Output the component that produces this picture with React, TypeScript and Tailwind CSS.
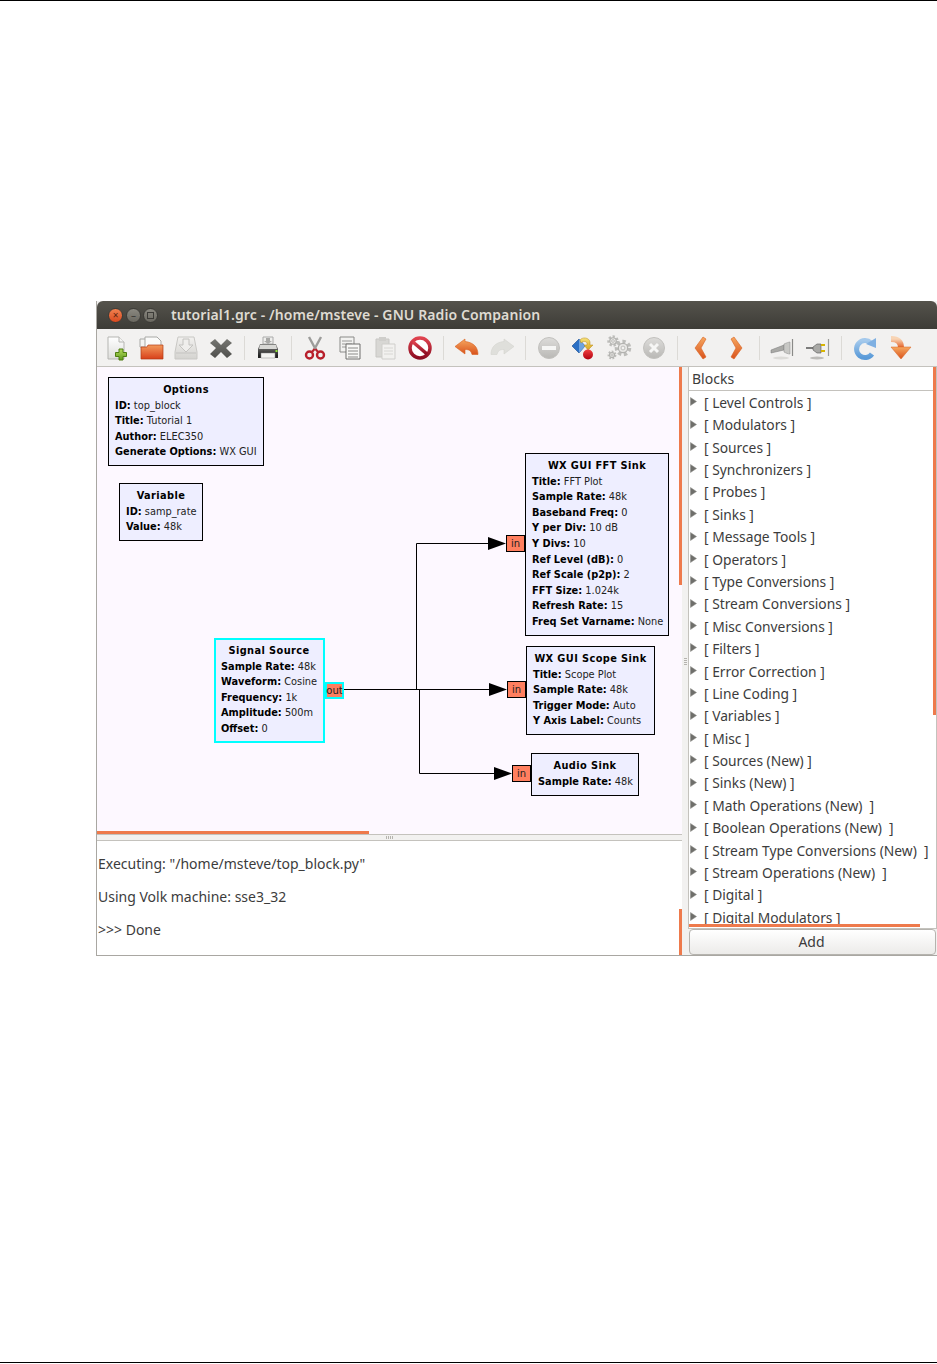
import React from 'react';

const blockCategories = [
  '[ Level Controls ]', '[ Modulators ]', '[ Sources ]', '[ Synchronizers ]', '[ Probes ]', '[ Sinks ]',
  '[ Message Tools ]', '[ Operators ]', '[ Type Conversions ]', '[ Stream Conversions ]', '[ Misc Conversions ]',
  '[ Filters ]', '[ Error Correction ]', '[ Line Coding ]', '[ Variables ]', '[ Misc ]', '[ Sources (New) ]',
  '[ Sinks (New) ]', '[ Math Operations (New)  ]', '[ Boolean Operations (New)  ]',
  '[ Stream Type Conversions (New)  ]', '[ Stream Operations (New)  ]', '[ Digital ]', '[ Digital Modulators ]',
];

interface FlowBlockProps {
  title: string;
  rows: [string, string][];
  className: string;
  selected?: boolean;
}

function FlowBlock({ title, rows, className, selected }: FlowBlockProps) {
  return (
    <div
      className={`absolute bg-[#eeeeff] text-[9.8px] leading-[15.6px] whitespace-nowrap text-[#222] font-['DejaVu_Sans',sans-serif] ${selected ? 'border-2 border-[#00ffff] pt-[3px] pl-[5px]' : 'border border-black pt-[4px] pl-[6px]'} ${className}`}
    >
      <div className="text-center pr-[6px] font-bold text-black tracking-[0.4px]">{title}</div>
      {rows.map(([k, v]) => (
        <div key={k}>
          <span className="font-bold text-black">{k}:</span> {v}
        </div>
      ))}
    </div>
  );
}

function Port({ label, className, selected }: { label: string; className: string; selected?: boolean }) {
  return (
    <div
      className={`absolute flex items-center justify-center bg-[#ff7f5f] text-[10px] text-[#222] font-['DejaVu_Sans',sans-serif] ${selected ? 'border-2 border-[#00ffff]' : 'border border-black'} ${className}`}
    >
      {label}
    </div>
  );
}

function Grad({ id, from, to }: { id: string; from: string; to: string }) {
  return (
    <linearGradient id={id} x1="0" y1="0" x2="0" y2="1">
      <stop offset="0" stopColor={from} />
      <stop offset="1" stopColor={to} />
    </linearGradient>
  );
}

function Ico({ children }: { children: React.ReactNode }) {
  return (
    <div className="flex w-[35px] shrink-0 items-center justify-center">
      <svg width="26" height="26" viewBox="0 0 26 26">
        {children}
      </svg>
    </div>
  );
}

function Sep() {
  return (
    <div className="flex w-[12px] shrink-0 justify-center">
      <div className="h-[24px] w-px bg-[#dcdad6]" />
    </div>
  );
}

function Gear({ cx, cy, r }: { cx: number; cy: number; r: number }) {
  return (
    <g>
      <circle cx={cx} cy={cy} r={r} fill="none" stroke="#bdbdba" strokeWidth={r * 0.55} strokeDasharray={`${r * 0.5} ${r * 0.4}`} />
      <circle cx={cx} cy={cy} r={r * 0.72} fill="#e8e7e5" stroke="#b2b2af" strokeWidth="1.2" />
      <circle cx={cx} cy={cy} r={r * 0.3} fill="#f2f1f0" stroke="#b2b2af" strokeWidth="0.8" />
    </g>
  );
}

function Toolbar() {
  return (
    <div className="flex h-[38px] shrink-0 items-center bg-[#f2f1f0] pl-[1px] border-b border-[#c4c2bd]">
      <svg width="0" height="0" className="absolute">
        <defs>
          <Grad id="gPage" from="#ffffff" to="#dededb" />
          <Grad id="gGreen" from="#b5dc5c" to="#5f9a1e" />
          <Grad id="gFolder" from="#f39a5c" to="#d8401a" />
          <Grad id="gDrive" from="#f2f1ef" to="#d4d3d0" />
          <Grad id="gDark" from="#767672" to="#4f4f4c" />
          <Grad id="gPrinter" from="#8a8a88" to="#1e1e1e" />
          <Grad id="gRed" from="#e0434f" to="#8c0d22" />
          <Grad id="gOrange" from="#f6a860" to="#d9521c" />
          <Grad id="gGrey" from="#dddcda" to="#b9b8b5" />
          <Grad id="gBlue" from="#a4c9ec" to="#5a9ad8" />
          <Grad id="gDot" from="#f04040" to="#b00010" />
          <Grad id="gYellow" from="#f6e27a" to="#d9a520" />
          <Grad id="gFade" from="#f8d4b4" to="#e25a20" />
        </defs>
      </svg>
      {/* new */}
      <Ico>
        <path d="M5 2h11l5 5v17H5z" fill="url(#gPage)" stroke="#b5b5b2" />
        <path d="M16 2v5h5" fill="#f5f5f3" stroke="#b5b5b2" />
        <path d="M16 14h4v3.500h3.500v4H20V25h-4v-3.500h-3.500v-4H16z" fill="url(#gGreen)" stroke="#4e7d12" />
      </Ico>
      {/* open */}
      <Ico>
        <path d="M2 4h9v8H2z" fill="#f4f4f2" stroke="#a9a9a6" />
        <path d="M7 2h12l4 4v7H7z" fill="#fbfbfa" stroke="#a9a9a6" />
        <path d="M3 12h6l1-2h15v14H3z" fill="url(#gFolder)" stroke="#b23a14" strokeWidth="0.7" />
      </Ico>
      {/* save, disabled */}
      <Ico>
        <path d="M5 2h16l3 15v7H2v-7z" fill="url(#gDrive)" stroke="#c9c8c5" />
        <path d="M10 4h6v6h4l-7 7-7-7h4z" fill="#efeeec" stroke="#c4c3c0" />
        <path d="M3 18h20" stroke="#c4c3c0" />
      </Ico>
      {/* close */}
      <Ico>
        <path d="M7 4l6 6 6-6 5 4-6 5 6 6-5 4-6-6-6 6-5-4 6-6-6-5z" fill="url(#gDark)" />
      </Ico>
      <Sep />
      {/* print */}
      <Ico>
        <path d="M8 2h10v7H8z" fill="#eeeeec" stroke="#aaa" />
        <path d="M11 3h4v3h2l-4 3-4-3h2z" fill="#a8a8a6" />
        <path d="M5 9h16l2 5v7H3v-7z" fill="url(#gPrinter)" />
        <path d="M5 10h16l1 4H4z" fill="#d8d8d5" />
        <path d="M3 20h20v3H3z" fill="#222" />
        <path d="M6 18h14v5H6z" fill="#f4f4f2" stroke="#888" strokeWidth="0.5" />
        <rect x="20.500" y="15" width="2" height="2" fill="#8ae234" />
      </Ico>
      <Sep />
      {/* cut */}
      <Ico>
        <path d="M7 2l7 13M19 2l-7 13" stroke="#9c9c9a" strokeWidth="2.400" fill="none" />
        <circle cx="7.500" cy="20" r="3.500" fill="none" stroke="#b81f2b" strokeWidth="2.400" />
        <circle cx="18.500" cy="20" r="3.500" fill="none" stroke="#b81f2b" strokeWidth="2.400" />
        <path d="M10 17l2.500-3M16 17l-2.500-3" stroke="#b81f2b" strokeWidth="2" />
      </Ico>
      {/* copy */}
      <Ico>
        <path d="M3 2h14v15H3z" fill="#f2f2f0" stroke="#8a8a88" />
        <path d="M5 6h10M5 9h10M5 12h10" stroke="#9a9a98" />
        <path d="M9 9h14v15H9z" fill="#f8f8f6" stroke="#6e6e6c" />
        <path d="M11 13h10M11 16h10M11 19h10M11 22h10" stroke="#8a8a88" />
      </Ico>
      {/* paste, disabled */}
      <Ico>
        <path d="M4 4h13v18H4z" fill="#d8d7d4" stroke="#c8c7c4" />
        <path d="M7 2h7v4H7z" fill="#cfcecb" />
        <path d="M10 9h13v15H10z" fill="#f2f1ef" stroke="#cfcecb" />
        <path d="M12 13h9M12 16h9M12 19h9" stroke="#d8d7d4" />
      </Ico>
      {/* stop */}
      <Ico>
        <circle cx="13" cy="13" r="10" fill="#fff" stroke="url(#gRed)" strokeWidth="3.500" />
        <path d="M6 7l14 12" stroke="url(#gRed)" strokeWidth="3.500" />
      </Ico>
      <Sep />
      {/* undo */}
      <Ico>
        <path d="M11 4L1 11.500l10 7.500v-4.500c4 0 6 1 7 5h6c0-7-4-12-13-13z" fill="url(#gOrange)" stroke="#d9601f" strokeWidth="0.6" />
      </Ico>
      {/* redo, disabled */}
      <Ico>
        <path d="M15 4l10 7.500-10 7.500v-4.500c-4 0-6 1-7 5H2c0-7 4-12 13-13z" fill="#dfdfdb" stroke="#d3d3cf" strokeWidth="0.6" />
      </Ico>
      <Sep />
      {/* remove */}
      <Ico>
        <circle cx="13" cy="13" r="10.500" fill="url(#gGrey)" stroke="#c2c1be" />
        <rect x="6" y="11" width="14" height="4" fill="#f6f6f5" />
      </Ico>
      {/* rotate */}
      <Ico>
        <path d="M1 11l7-7 6 7-6 7z" fill="#2a6fc4" stroke="#174a8c" strokeWidth="0.6" />
        <path d="M8 4l6 7-6 7z" fill="#6ea3e0" />
        <path d="M9 5c2-3 9-3 10 2v3h3l-5 5-4-5h3V8c-1-2-4-2-6 0z" fill="url(#gYellow)" stroke="#b98a14" strokeWidth="0.5" />
        <circle cx="17" cy="19.500" r="5" fill="url(#gDot)" />
      </Ico>
      {/* gears */}
      <Ico>
        <Gear cx={7} cy={6} r={4.500} />
        <Gear cx={17} cy={13} r={6.500} />
        <Gear cx={6} cy={20} r={3.500} />
      </Ico>
      {/* stop circle */}
      <Ico>
        <circle cx="13" cy="13" r="10.500" fill="url(#gGrey)" stroke="#c2c1be" />
        <path d="M9 9l8 8M17 9l-8 8" stroke="#f6f6f5" strokeWidth="3" />
      </Ico>
      <Sep />
      {/* previous */}
      <Ico>
        <path d="M15 2l-8 11 8 11 3-2-5-9 5-9z" fill="url(#gOrange)" stroke="#d9601f" strokeWidth="0.6" />
      </Ico>
      {/* next */}
      <Ico>
        <path d="M11 2l8 11-8 11-3-2 5-9-5-9z" fill="url(#gOrange)" stroke="#d9601f" strokeWidth="0.6" />
      </Ico>
      <Sep />
      {/* disconnect */}
      <Ico>
        <path d="M1 15l13-5v5L1 18z" fill="#a9a9a6" stroke="#777" strokeWidth="0.5" />
        <path d="M14 9c2-1 5-2 6-2v12c-2 0-4-1-6-2z" fill="#c8c8c5" stroke="#888" strokeWidth="0.5" />
        <path d="M22.500 4v17" stroke="#8a8a88" strokeWidth="1.200" />
        <ellipse cx="11" cy="23" rx="8" ry="1.500" fill="#dcdbd8" />
      </Ico>
      {/* connect */}
      <Ico>
        <path d="M1 13h7" stroke="#555" strokeWidth="1.500" />
        <path d="M8 12l4-3h4v9h-4l-4-3z" fill="#a9a9a6" stroke="#555" strokeWidth="0.6" />
        <path d="M16 10h4M16 16h4" stroke="#d8b400" strokeWidth="2" />
        <path d="M23.500 4v17" stroke="#9a9a98" strokeWidth="1.200" />
        <ellipse cx="12" cy="23" rx="7" ry="1.500" fill="#bdbcb9" />
      </Ico>
      <Sep />
      {/* refresh */}
      <Ico>
        <path d="M19 8A8.500 8.500 0 1 0 20 19" fill="none" stroke="url(#gBlue)" strokeWidth="5" />
        <path d="M14 9L24 3v10z" fill="#7fb0e2" />
      </Ico>
      {/* reload / flow */}
      <Ico>
        <path d="M4 4c7 0 10 3 10 9" fill="none" stroke="url(#gFade)" strokeWidth="6" />
        <path d="M4 12h20l-10 12z" fill="url(#gOrange)" stroke="#d9601f" strokeWidth="0.5" />
      </Ico>
    </div>
  );
}

function FlowCanvas() {
  return (
    <div className="relative h-[467px] shrink-0 overflow-hidden bg-[#fdf8ff]">
      <FlowBlock
        title="Options"
        className="left-[11px] top-[10px] h-[89px] w-[156px]"
        rows={[['ID', 'top_block'], ['Title', 'Tutorial 1'], ['Author', 'ELEC350'], ['Generate Options', 'WX GUI']]}
      />
      <FlowBlock
        title="Variable"
        className="left-[22px] top-[116px] h-[58px] w-[84px]"
        rows={[['ID', 'samp_rate'], ['Value', '48k']]}
      />
      <FlowBlock
        title="Signal Source"
        selected
        className="left-[117px] top-[271px] h-[105px] w-[111px]"
        rows={[['Sample Rate', '48k'], ['Waveform', 'Cosine'], ['Frequency', '1k'], ['Amplitude', '500m'], ['Offset', '0']]}
      />
      <Port label="out" selected className="left-[228px] top-[315px] h-[17px] w-[19px]" />
      <FlowBlock
        title="WX GUI FFT Sink"
        className="left-[428px] top-[86px] h-[183px] w-[144px]"
        rows={[
          ['Title', 'FFT Plot'], ['Sample Rate', '48k'], ['Baseband Freq', '0'], ['Y per Div', '10 dB'], ['Y Divs', '10'],
          ['Ref Level (dB)', '0'], ['Ref Scale (p2p)', '2'], ['FFT Size', '1.024k'], ['Refresh Rate', '15'], ['Freq Set Varname', 'None'],
        ]}
      />
      <Port label="in" className="left-[409px] top-[168px] h-[17px] w-[19px]" />
      <FlowBlock
        title="WX GUI Scope Sink"
        className="left-[429px] top-[279px] h-[89px] w-[129px]"
        rows={[['Title', 'Scope Plot'], ['Sample Rate', '48k'], ['Trigger Mode', 'Auto'], ['Y Axis Label', 'Counts']]}
      />
      <Port label="in" className="left-[410px] top-[314px] h-[17px] w-[19px]" />
      <FlowBlock
        title="Audio Sink"
        className="left-[434px] top-[386px] h-[43px] w-[108px]"
        rows={[['Sample Rate', '48k']]}
      />
      <Port label="in" className="left-[415px] top-[398px] h-[17px] w-[19px]" />
      <svg className="absolute left-0 top-0" width="584" height="467">
        <path d="M247 322.500H392M319.500 322.500V176.500H392M322.500 322.500V406.500H398" fill="none" stroke="black" />
        <path d="M391 170l18 6.500-18 6.500zM392 316l18 6.500-18 6.500zM397 400l18 6.500-18 6.500z" fill="black" />
      </svg>
      <div className="absolute left-0 bottom-0 h-[3px] w-[272px] bg-[#ee7a4c]" />
      <div className="absolute right-0 top-0 h-[218px] w-[3px] bg-[#ee7a4c]" />
    </div>
  );
}

function BlocksPanel() {
  return (
    <div className="flex w-[249px] shrink-0 flex-col">
      <div className="relative flex min-h-0 flex-1 flex-col overflow-hidden bg-white border border-[#c4c2bd] border-t-0">
        <div className="flex h-[24px] shrink-0 items-center pl-[3px] text-[#3c3c3c] border-b border-[#c4c2bd] text-[14px]">
          Blocks
        </div>
        <div className="min-h-0 flex-1 overflow-hidden pt-[1px]">
          {blockCategories.map((name) => (
            <div key={name} className="flex h-[22.400px] items-center whitespace-nowrap">
              <svg width="7" height="9" viewBox="0 0 7 9" className="ml-[1px] mr-[7px] mb-[3px] shrink-0">
                <path d="M0.500 0.500L6.500 4.500L0.500 8.500z" fill="#6f6f6b" stroke="#8a8a86" strokeWidth="0.5" />
              </svg>
              <span className="whitespace-pre text-[13.800px] text-[#3c3c3c]">{name}</span>
            </div>
          ))}
        </div>
        <div className="absolute right-0 top-0 h-[348px] w-[3px] bg-[#ee7a4c]" />
        <div className="absolute left-0 bottom-[1px] h-[3px] w-[231px] bg-[#ee7a4c]" />
      </div>
      <div className="ml-[1px] mr-[1px] flex h-[26px] shrink-0 items-center justify-center rounded-[4px] border border-[#b5b3ae] bg-gradient-to-b from-white to-[#ecebe9] pb-[2px] pr-[2px] text-[14px] text-[#3c3c3c]">
        Add
      </div>
    </div>
  );
}

export default function App() {
  return (
    <div className="flex h-[1364px] flex-col bg-white font-['Noto_Sans',sans-serif]">
      <div className="h-px shrink-0 bg-black" />
      <div className="ml-[96px] mt-[300px] flex h-[655px] w-[841px] shrink-0 flex-col border-l border-b border-[#a9a7a2] bg-[#f2f1f0]">
        <div className="flex h-[28px] shrink-0 items-center rounded-t-[6px] bg-gradient-to-b from-[#55534c] to-[#3d3c37] pl-[11px]">
          <div className="h-[15px] w-[15px] shrink-0 rounded-full bg-gradient-to-b from-[#f0814f] to-[#d9491e] border border-[#3c3b37] flex items-center justify-center text-[10px] leading-none text-[#5a2410]">×</div>
          <div className="ml-[3px] h-[15px] w-[15px] shrink-0 rounded-full bg-gradient-to-b from-[#8a8880] to-[#6a6860] border border-[#3c3b37] flex items-center justify-center text-[10px] leading-none text-[#3c3b37]">–</div>
          <div className="ml-[2px] h-[15px] w-[15px] shrink-0 rounded-full bg-gradient-to-b from-[#8a8880] to-[#6a6860] border border-[#3c3b37] flex items-center justify-center">
            <div className="h-[7px] w-[7px] border border-[#3c3b37]" />
          </div>
          <div className="ml-[13px] mb-[1px] whitespace-nowrap text-[14px] font-semibold tracking-[0.1px] text-[#dfdbd2]">
            tutorial1.grc - /home/msteve - GNU Radio Companion
          </div>
        </div>
        <Toolbar />
        <div className="flex min-h-0 flex-1">
          <div className="flex w-[585px] shrink-0 flex-col">
            <FlowCanvas />
            <div className="flex h-[6px] shrink-0 items-center justify-center border-t border-[#c4c2bd]">
              <div className="h-[3px] w-[8px] bg-[repeating-linear-gradient(90deg,#b5b3ae_0px,#b5b3ae_1px,transparent_1px,transparent_2px)]" />
            </div>
            <div className="relative flex min-h-0 flex-1 flex-col gap-[12px] overflow-hidden bg-white border-t border-[#c4c2bd] pl-[1px] pt-[12px] text-[14px] leading-[21px] text-[#3c3c3c]">
              <div>Executing: "/home/msteve/top_block.py"</div>
              <div>Using Volk machine: sse3_32</div>
              <div>&gt;&gt;&gt; Done</div>
              <div className="absolute right-0 bottom-0 h-[46px] w-[3px] bg-[#ee7a4c]" />
            </div>
          </div>
          <div className="flex w-[6px] shrink-0 items-center justify-center">
            <div className="h-[8px] w-[3px] bg-[repeating-linear-gradient(0deg,#b5b3ae_0px,#b5b3ae_1px,transparent_1px,transparent_2px)]" />
          </div>
          <BlocksPanel />
        </div>
      </div>
      <div className="mt-auto mb-px h-px shrink-0 bg-black" />
    </div>
  );
}
